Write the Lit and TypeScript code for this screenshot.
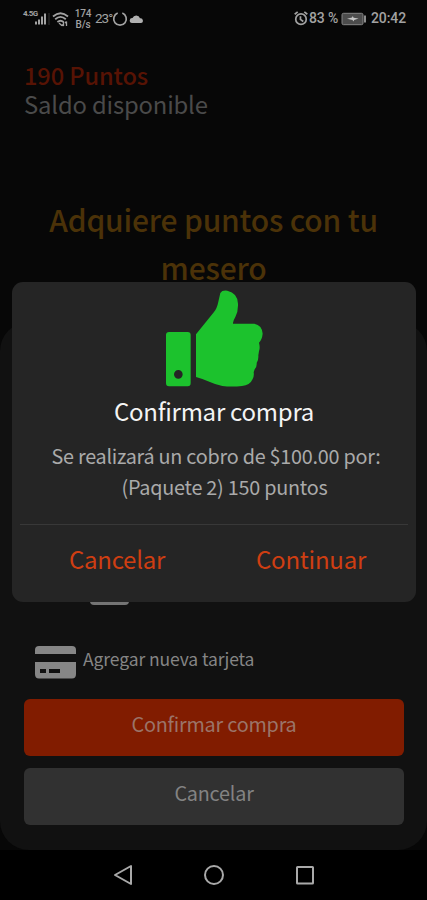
import { LitElement, html, css } from "lit";
import { customElement } from "lit/decorators.js";

@customElement("status-bar")
class StatusBar extends LitElement {
  static styles = css`
    :host { display: flex; height: 38px; padding: 0 20px 0 23px; box-sizing: border-box; justify-content: space-between; color: #a2a2a2; font: 500 13.5px/37px Roboto, sans-serif; white-space: nowrap; }
    .group { display: flex; align-items: center; height: 37px; }
    svg { display: block; flex: none; }
    .signal { display: flex; width: 29px; height: 37px; align-items: flex-start; }
    .gen { width: 11px; margin-top: 10px; font: 700 8px/8px Roboto, sans-serif; letter-spacing: -0.6px; }
    .bars { margin-top: 13px; }
    .rate { width: 18px; margin-left: 4px; font: 500 10px/11px Roboto, sans-serif; letter-spacing: -0.2px; text-align: center; }
    .temp { margin-left: 3px; width: 17px; font-size: 13.5px; letter-spacing: -1px; font-weight: 400; }
    .pct { margin-left: 1px; width: 32px; font-size: 14px; letter-spacing: -0.1px; }
    .time { margin-left: 4px; width: 36px; font-size: 14px; letter-spacing: -0.1px; }
  `;
  render() {
    return html`
      <div class="group">
        <div class="signal">
          <span class="gen">4.5G</span>
          <svg class="bars" width="16" height="12" viewBox="0 0 16 12" fill="#a2a2a2">
            <rect x="1" y="8.5" width="2" height="3" /><rect x="4" y="6.5" width="2" height="5" />
            <rect x="7" y="3.5" width="2" height="8" /><rect x="10" y="0.5" width="2" height="11" />
            <rect x="14.5" y="0" width="1" height="12" fill="#333" />
          </svg>
        </div>
        <svg width="18" height="16" viewBox="0 0 18 16" fill="none" stroke="#a2a2a2" stroke-width="1.8">
          <path d="M1 5.5Q8.5-1 16 5.5M3.2 8.2Q8.5 3.6 13.8 8.2M5.4 11Q8.5 8.4 11.6 11" />
          <path d="M7 12l3 2.8M11.5 10.5v4.5m-1.5-1.5l1.5 1.5M14.5 15v-4.5m-1.5 1.5l1.5-1.5" stroke-width="1.3" />
        </svg>
        <div class="rate">174<br />B/s</div>
        <span class="temp">23°</span>
        <svg width="16" height="16" viewBox="0 0 16 16" fill="none" stroke="#a2a2a2" stroke-width="1.7">
          <path d="M10.3 2A6.3 6.3 0 1 1 5.7 2" />
        </svg>
        <svg width="16" height="16" viewBox="0 0 15 16" fill="#b0b0b0">
          <path d="M3.5 12a2.5 2.5 0 0 1 .5-5A4 4 0 0 1 11.5 7.2a2.4 2.4 0 0 1 .9 4.8z" />
        </svg>
      </div>
      <div class="group">
        <svg width="14" height="15" viewBox="0 0 13 14" fill="none" stroke="#a2a2a2" stroke-width="1.6">
          <circle cx="6.5" cy="7.6" r="4.9" /><path d="M.6 3L3.4.8M12.4 3L9.6.8M6 4.8v3l2.6 2" />
        </svg>
        <span class="pct">83 %</span>
        <svg width="26" height="14" viewBox="0 0 26 14">
          <rect x="1" y="1.3" width="21" height="11.4" rx="1.5" fill="#4c4c4c" stroke="#858585" />
          <path d="M6 6.8l5-1.2.8-1.6.8 1.8 5 .8-4.4 1.4-.8 1.4-.9-1.5z" fill="#c4c4c4" />
          <path d="M24 3.5v7" stroke="#8d8d8d" stroke-width="2" />
        </svg>
        <span class="time">20:42</span>
      </div>
    `;
  }
}

@customElement("confirm-dialog")
class ConfirmDialog extends LitElement {
  static styles = css`
    :host { display: flex; flex-direction: column; align-items: center; box-sizing: border-box; width: 404px; height: 320px; padding: 8px 8px 0; background: #252525; border-radius: 11px; }
    svg { display: block; flex: none; }
    .title { margin-top: 2px; height: 41px; font-size: 24px; letter-spacing: -0.25px; line-height: 41px; color: #f4f4f4; white-space: nowrap; }
    .text { margin-top: 10px; font-size: 19.8px; letter-spacing: -0.24px; line-height: 30.5px; color: #aaa; text-align: center; white-space: nowrap; padding-left: 4px; }
    .last { padding-left: 17px; }
    .actions { display: grid; grid-template-columns: 1fr 1fr; align-self: stretch; margin-top: 22px; border-top: 1px solid #383838; height: 74px; line-height: 68px; font-size: 24px; letter-spacing: -0.25px; color: #cf3e12; text-align: center; }
  `;
  render() {
    return html`
      <svg width="98" height="98" viewBox="75 29 294 294" fill="#1cc22d">
        <path fill-rule="evenodd" d="M87 155H143Q152 155 152 164V308Q152 318 143 318H87Q78 318 78 308V164Q78 155 87 155ZM115 269A13 13 0 1 0 115 295A13 13 0 1 0 115 269Z" />
        <path d="M168 162L222 95Q231 84 235 64L241 38Q246 29 262 31Q293 38 294 70Q295 93 286 110Q278 123 279 130H343Q366 134 368 160Q366 178 357 187Q361 202 357 213L355 225Q356 240 350 248Q351 260 344 267L341 276Q343 286 338 296Q330 315 306 317Q275 320 247 317Q226 313 204 303Q188 295 168 290Z" />
      </svg>
      <div class="title">Confirmar compra</div>
      <div class="text">
        Se realizará un cobro de $100.00 por:
        <div class="last">(Paquete 2) 150 puntos</div>
      </div>
      <div class="actions"><span>Cancelar</span><span>Continuar</span></div>
    `;
  }
}

@customElement("app-root")
class AppRoot extends LitElement {
  static styles = css`
    :host { display: block; position: relative; width: 427px; height: 900px; overflow: hidden; background: #070707; font-family: "Noto Sans CJK SC", "Noto Sans", sans-serif; }
    svg { display: block; flex: none; }
    .balance { height: 157px; padding: 23px 24px 0; box-sizing: border-box; }
    .points { font-size: 23.6px; letter-spacing: -0.1px; font-weight: 500; line-height: 29px; color: #571304; }
    .label { font-size: 23.8px; letter-spacing: -0.15px; line-height: 28px; color: #4a4a4a; }
    .promo { height: 127px; margin: 0; font-size: 30px; letter-spacing: -0.18px; font-weight: 500; line-height: 48px; color: #4b3208; text-align: center; padding: 0 40px; }
    .sheet { height: 528px; box-sizing: border-box; padding: 278px 23px 0 24px; background: #111; border-radius: 29px; }
    .chip { width: 39px; height: 5px; margin-left: 66px; background: #747474; border-radius: 0 0 4px 4px; }
    .card { display: flex; height: 58px; margin: 28px 0 8px 11px; align-items: center; font-size: 17.5px; letter-spacing: -0.1px; color: #858585; }
    .card span { margin: -7px 0 0 7px; }
    .button { height: 57px; border-radius: 6px; text-align: center; font-size: 19.8px; letter-spacing: -0.2px; line-height: 50px; color: #838383; margin-bottom: 12px; }
    .primary { background: #811c00; color: #9b7469; }
    .neutral { background: #313131; }
    .nav { height: 50px; display: flex; align-items: center; justify-content: center; gap: 70px; background: #000; }
    .overlay { position: absolute; left: 12px; top: 282px; }
  `;
  render() {
    return html`
      <status-bar></status-bar>
      <div class="balance">
        <div class="points">190 Puntos</div>
        <div class="label">Saldo disponible</div>
      </div>
      <h1 class="promo">Adquiere puntos con tu mesero</h1>
      <div class="sheet">
        <div class="chip"></div>
        <div class="card">
          <svg width="41" height="33" viewBox="0 0 41 33" fill="#868686">
            <path d="M0 8V4Q0 0 4 0H37Q41 0 41 4V8Z" />
            <path fill-rule="evenodd" d="M0 16H41V28Q41 32.5 37 32.5H4Q0 32.5 0 28ZM5 23V27H11V23ZM14 23V27H25V23Z" />
          </svg>
          <span>Agregar nueva tarjeta</span>
        </div>
        <div class="button primary">Confirmar compra</div>
        <div class="button neutral">Cancelar</div>
      </div>
      <div class="nav">
        <svg width="20" height="22" viewBox="0 0 20 22" fill="none" stroke="#a9a9a9" stroke-width="2" stroke-linejoin="round"><path d="M18 2V20L2 11Z" /></svg>
        <svg width="22" height="22" viewBox="0 0 22 22" fill="none" stroke="#a9a9a9" stroke-width="2"><circle cx="11" cy="11" r="9" /></svg>
        <svg width="20" height="22" viewBox="0 0 20 22" fill="none" stroke="#a9a9a9" stroke-width="2"><rect x="2" y="3" width="16" height="16.5" rx=".5" /></svg>
      </div>
      <confirm-dialog class="overlay"></confirm-dialog>
    `;
  }
}
